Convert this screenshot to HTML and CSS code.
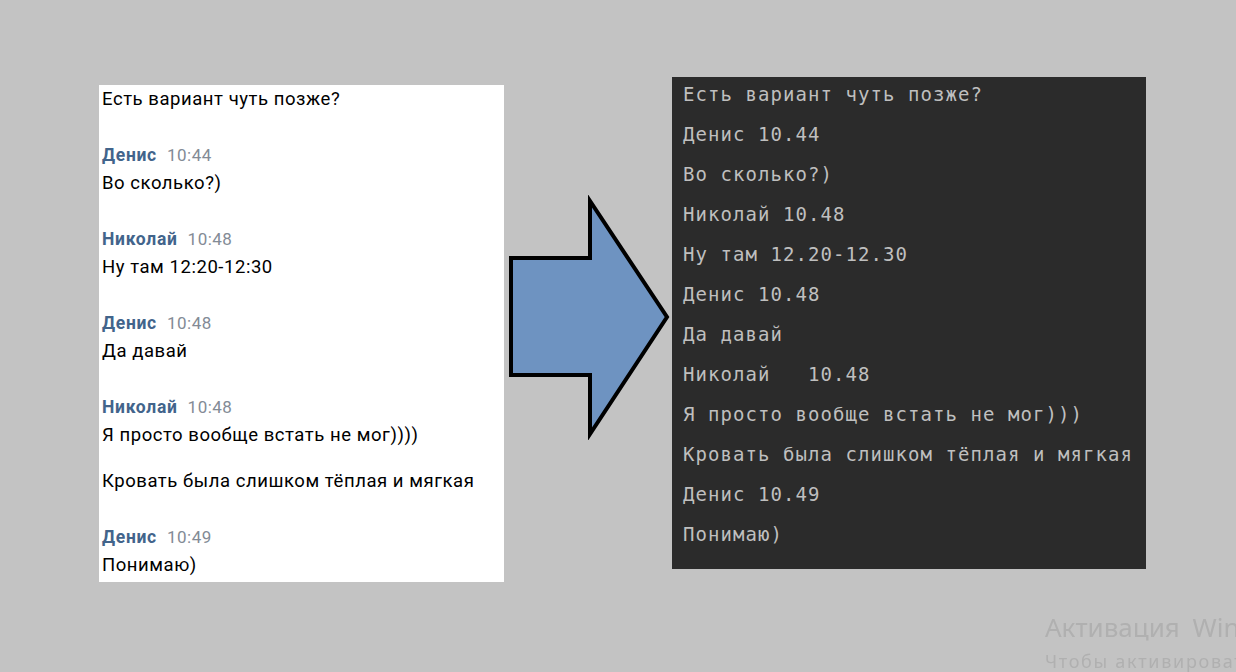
FILE: index.html
```html
<!DOCTYPE html>
<html lang="ru">
<head>
<meta charset="utf-8">
<title>Чат</title>
<link rel="stylesheet" href="styles.css">
</head>
<body>
<div class="stage">
  <div class="chat">
    <div class="msg">Есть вариант чуть позже?</div>
    <div class="group">
      <div class="head"><span class="name">Денис</span><span class="time">10:44</span></div>
      <div class="msg">Во сколько?)</div>
    </div>
    <div class="group">
      <div class="head"><span class="name">Николай</span><span class="time">10:48</span></div>
      <div class="msg">Ну там 12:20-12:30</div>
    </div>
    <div class="group">
      <div class="head"><span class="name">Денис</span><span class="time">10:48</span></div>
      <div class="msg">Да давай</div>
    </div>
    <div class="group">
      <div class="head"><span class="name">Николай</span><span class="time">10:48</span></div>
      <div class="msg">Я просто вообще встать не мог))))</div>
      <div class="msg spaced">Кровать была слишком тёплая и мягкая</div>
    </div>
    <div class="group">
      <div class="head"><span class="name">Денис</span><span class="time">10:49</span></div>
      <div class="msg">Понимаю)</div>
    </div>
  </div>

  <svg class="arrow" width="168" height="245" viewBox="504 195 168 245">
    <polygon points="511,258 590,258 590,201 667,317 590,434 590,375 511,375" fill="#6e93c1" stroke="#000" stroke-width="4" stroke-linejoin="miter"/>
  </svg>

  <div class="console">
    <div class="line">Есть вариант чуть позже?</div>
    <div class="line">Денис 10.44</div>
    <div class="line">Во сколько?)</div>
    <div class="line">Николай 10.48</div>
    <div class="line">Ну там 12.20-12.30</div>
    <div class="line">Денис 10.48</div>
    <div class="line">Да давай</div>
    <div class="line">Николай   10.48</div>
    <div class="line">Я просто вообще встать не мог)))</div>
    <div class="line">Кровать была слишком тёплая и мягкая</div>
    <div class="line">Денис 10.49</div>
    <div class="line">Понимаю)</div>
  </div>
</div>

<div class="watermark">
  <div class="wm-title">Активация Windows</div>
  <div class="wm-sub">Чтобы активировать Windows, перейдите в раздел "Параметры".</div>
</div>
</body>
</html>
```

FILE: styles.css
```css
html, body {
  margin: 0;
  padding: 0;
  width: 1236px;
  height: 672px;
  overflow: hidden;
  background: #c3c3c3;
}

.stage {
  display: flex;
  align-items: flex-start;
  padding-left: 99px;
}

.chat {
  margin-top: 85px;
  width: 405px;
  box-sizing: border-box;
  background: #ffffff;
  padding: 1px 0 4px 3px;
  font-family: Roboto, "Liberation Sans", sans-serif;
  color: #000;
  flex: none;
}

.msg {
  font-size: 18.5px;
  letter-spacing: 0.55px;
  line-height: 26px;
  height: 26px;
  white-space: nowrap;
}

.msg.spaced {
  margin-top: 20px;
}

.group {
  margin-top: 32px;
}

.chat > .group:first-of-type {
  margin-top: 30px;
}

.head {
  height: 22px;
  line-height: 22px;
  padding-bottom: 4px;
  font-size: 17px;
  white-space: nowrap;
}

.name {
  font-size: 17.5px;
  letter-spacing: 0.7px;
  font-weight: 700;
  color: #42648b;
}

.time {
  font-size: 17px;
  letter-spacing: 0.5px;
  color: #838b96;
  margin-left: 10px;
}

.arrow {
  display: block;
  margin-top: 195px;
  flex: none;
}

.console {
  margin-top: 77px;
  width: 474px;
  height: 492px;
  box-sizing: border-box;
  background: #2b2b2b;
  padding: 5px 0 0 11px;
  display: flex;
  flex-direction: column;
  gap: 16px;
  font-family: "DejaVu Sans Mono", "Liberation Mono", monospace;
  font-size: 19px;
  letter-spacing: 1.06px;
  color: #bfbfbf;
  flex: none;
}

.line {
  line-height: 24px;
  white-space: pre;
}

.watermark {
  position: fixed;
  left: 1045px;
  top: 610px;
  white-space: nowrap;
  font-family: "Noto Sans", "Open Sans", sans-serif;
  color: #b0b0b0;
}

.wm-title {
  font-size: 26px;
  line-height: 34px;
  word-spacing: 6px;
}

.wm-sub {
  margin-top: 5px;
  font-size: 18px;
  letter-spacing: 1.7px;
  line-height: 24px;
}
```
